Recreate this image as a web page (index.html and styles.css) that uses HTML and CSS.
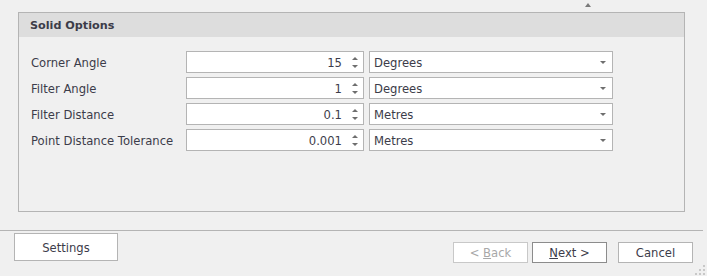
FILE: index.html
```html
<!DOCTYPE html>
<html>
<head>
<meta charset="utf-8">
<link rel="stylesheet" href="styles.css">
</head>
<body>
<div class="window">
  <div class="topstrip"><span class="collapse"></span></div>
  <div class="group">
    <div class="group-header">Solid Options</div>
    <div class="group-body">
      <div class="row">
        <label class="lbl">Corner Angle</label>
        <div class="spin"><span class="val">15</span><span class="arrows"><i class="up"></i><i class="down"></i></span></div>
        <div class="combo"><span class="cval">Degrees</span><i class="drop"></i></div>
      </div>
      <div class="row">
        <label class="lbl">Filter Angle</label>
        <div class="spin"><span class="val">1</span><span class="arrows"><i class="up"></i><i class="down"></i></span></div>
        <div class="combo"><span class="cval">Degrees</span><i class="drop"></i></div>
      </div>
      <div class="row">
        <label class="lbl">Filter Distance</label>
        <div class="spin"><span class="val">0.1</span><span class="arrows"><i class="up"></i><i class="down"></i></span></div>
        <div class="combo"><span class="cval">Metres</span><i class="drop"></i></div>
      </div>
      <div class="row">
        <label class="lbl">Point Distance Tolerance</label>
        <div class="spin"><span class="val">0.001</span><span class="arrows"><i class="up"></i><i class="down"></i></span></div>
        <div class="combo"><span class="cval">Metres</span><i class="drop"></i></div>
      </div>
    </div>
  </div>
  <div class="footer">
    <button class="btn settings">Settings</button>
    <div class="nav">
      <button class="btn navbtn disabled">&lt; <u>B</u>ack</button>
      <button class="btn navbtn primary"><u>N</u>ext &gt;</button>
      <button class="btn navbtn cancel">Cancel</button>
    </div>
    <svg class="grip" width="10" height="10" viewBox="0 0 10 10">
      <rect x="8" y="0" width="2" height="2" fill="#c8c8c8"/>
      <rect x="4" y="4" width="2" height="2" fill="#c8c8c8"/>
      <rect x="8" y="4" width="2" height="2" fill="#c8c8c8"/>
      <rect x="0" y="8" width="2" height="2" fill="#c8c8c8"/>
      <rect x="4" y="8" width="2" height="2" fill="#c8c8c8"/>
      <rect x="8" y="8" width="2" height="2" fill="#c8c8c8"/>
    </svg>
  </div>
</div>
</body>
</html>
```

FILE: styles.css
```css
html, body {
  margin: 0;
  padding: 0;
  background: #f0f0f0;
}
body {
  width: 707px;
  height: 276px;
  overflow: hidden;
  font-family: "DejaVu Sans", sans-serif;
  font-size: 11.6px;
  color: #3c3c4a;
}
.window {
  position: relative;
  height: 276px;
}
.topstrip {
  height: 12px;
  position: relative;
}
.collapse {
  position: absolute;
  left: 585px;
  top: 3px;
  width: 0;
  height: 0;
  border-left: 3px solid transparent;
  border-right: 3px solid transparent;
  border-bottom: 4px solid #7a7a7a;
}
.group {
  margin-left: 18px;
  width: 665px;
  height: 198px;
  border: 1px solid #b4b4b4;
  background: #f0f0f0;
}
.group-header {
  height: 24px;
  line-height: 25px;
  background: #dddddd;
  padding-left: 11px;
  font-size: 11.2px;
  font-weight: bold;
  color: #3c3c48;
}
.group-body {
  padding: 14px 0 0 12px;
  display: flex;
  flex-direction: column;
  gap: 4px;
}
.row {
  display: flex;
  align-items: center;
  height: 22px;
}
.lbl {
  width: 155px;
  flex: none;
  padding-top: 1px;
}
.spin {
  width: 176px;
  height: 20px;
  border: 1px solid #b4b4b4;
  background: #fff;
  display: flex;
  align-items: center;
  justify-content: flex-end;
}
.val {
  padding-right: 5px;
  padding-top: 1px;
}
.arrows {
  width: 16px;
  height: 20px;
  display: flex;
  flex-direction: column;
  align-items: center;
  justify-content: center;
  gap: 5px;
}
.arrows i {
  display: block;
  width: 0;
  height: 0;
  border-left: 3px solid transparent;
  border-right: 3px solid transparent;
}
.arrows .up { border-bottom: 3px solid #6e6e6e; }
.arrows .down { border-top: 3px solid #6e6e6e; }
.combo {
  margin-left: 5px;
  width: 242px;
  height: 20px;
  border: 1px solid #b4b4b4;
  background: #fff;
  display: flex;
  align-items: center;
  justify-content: space-between;
}
.cval {
  padding-left: 4px;
  padding-top: 1px;
}
.drop {
  display: block;
  width: 0;
  height: 0;
  margin-right: 6px;
  border-left: 3px solid transparent;
  border-right: 3px solid transparent;
  border-top: 3px solid #6e6e6e;
}
.footer {
  margin-top: 18px;
  border-top: 1px solid #b4b4b4;
  width: 703px;
  height: 44px;
  display: flex;
  justify-content: space-between;
  position: relative;
}
.btn {
  font-family: "DejaVu Sans", sans-serif;
  font-size: 11.6px;
  color: #3c3c4a;
  background: #fff;
  border: 1px solid #b4b4b4;
  padding: 1px 0 0 0;
  margin: 0;
}
.btn u { text-decoration: underline; }
.settings {
  margin-top: 2px;
  margin-left: 14px;
  width: 104px;
  height: 28px;
  padding-top: 2px;
}
.nav {
  display: flex;
  align-items: flex-start;
  margin-top: 11px;
  margin-right: 10px;
}
.navbtn {
  width: 75px;
  height: 21px;
}
.disabled {
  color: #a8a8a8;
  border-color: #c8c8c8;
}
.primary {
  margin-left: 4px;
  border-color: #8c8c8c;
}
.cancel {
  margin-left: 11px;
}
.grip {
  position: absolute;
  right: -2px;
  bottom: 0;
}
```
